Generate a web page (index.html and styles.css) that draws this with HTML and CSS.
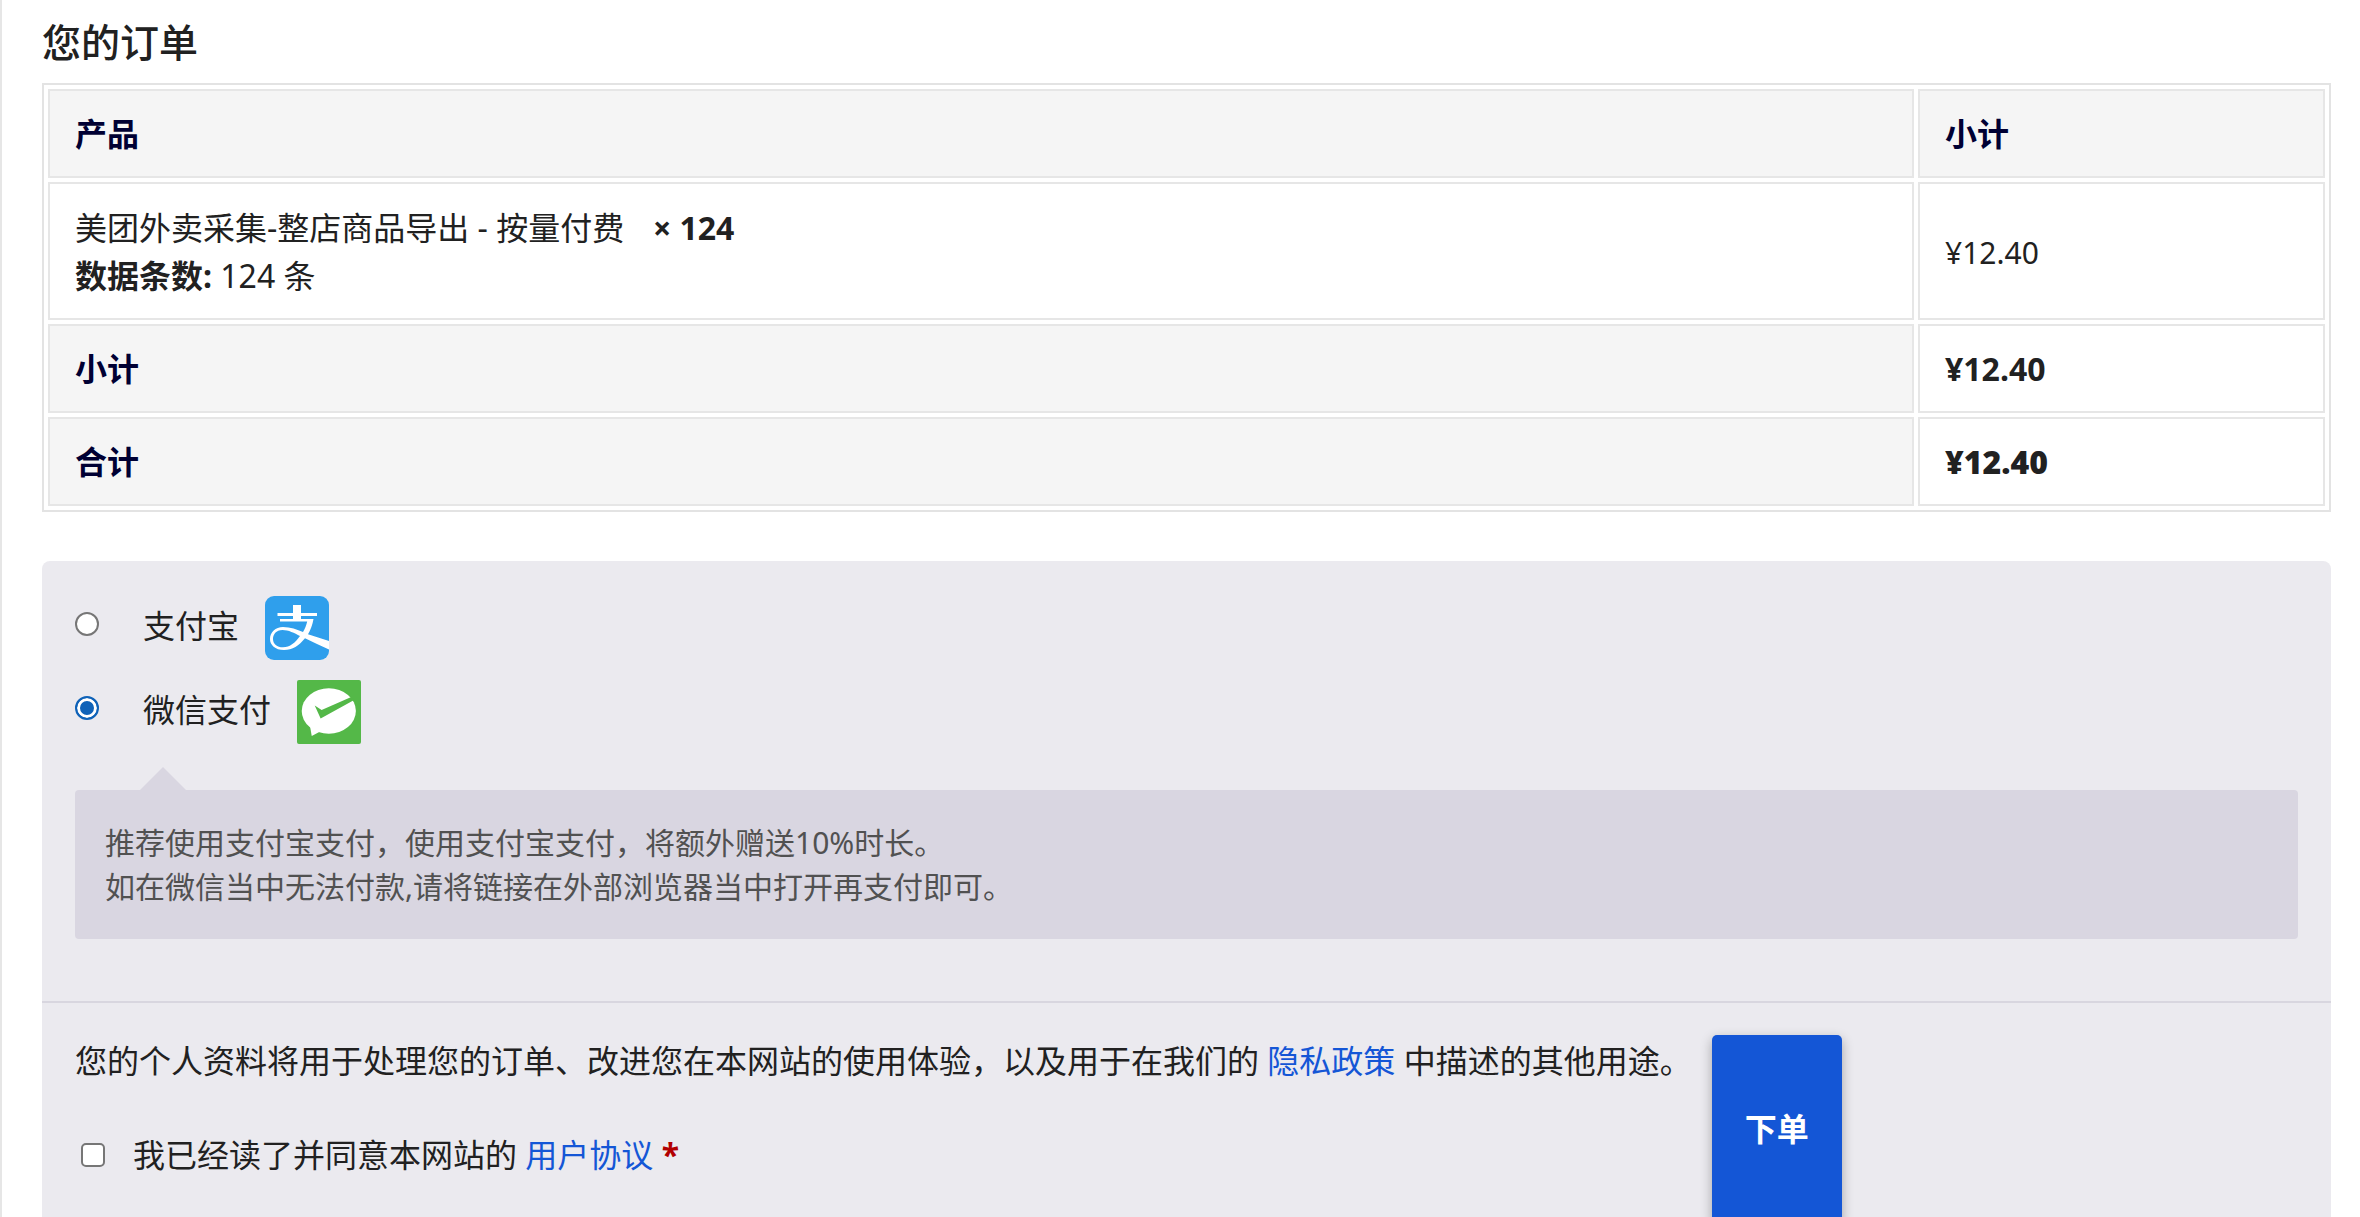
FILE: index.html
```html
<!DOCTYPE html>
<html lang="zh-CN">
<head>
<meta charset="utf-8">
<meta name="viewport" content="width=device-width, initial-scale=1">
<title>您的订单</title>
<link rel="stylesheet" href="styles.css">
</head>
<body>
<main class="checkout">
  <h3 class="checkout-title">您的订单</h3>

  <table class="order-table">
    <colgroup>
      <col>
      <col class="col-total">
    </colgroup>
    <thead>
      <tr><th scope="col">产品</th><th scope="col">小计</th></tr>
    </thead>
    <tbody>
      <tr>
        <td>
          <div><span class="product-name">美团外卖采集-整店商品导出 - 按量付费</span>&nbsp; <strong>×&nbsp;124</strong></div>
          <div><strong>数据条数:</strong> 124 条</div>
        </td>
        <td><span class="amount">¥12.40</span></td>
      </tr>
    </tbody>
    <tfoot>
      <tr><th scope="row">小计</th><td class="subtotal">¥12.40</td></tr>
      <tr><th scope="row">合计</th><td class="total">¥12.40</td></tr>
    </tfoot>
  </table>

  <form class="payment">
    <div class="methods">
      <div class="method">
        <input type="radio" id="pay-alipay" name="payment">
        <label for="pay-alipay"><span>支付宝</span>
          <svg class="logo" viewBox="0 0 64 64" aria-hidden="true">
            <rect width="64" height="64" rx="9" fill="#2f9fec"/>
            <path fill="#fff" d="M28 9h8v8h16v3H36v3h12.500C47.500 29 45.500 34 43 38.200L64 45v8.500C56 50 48 46 40 42.200 34 49.500 27.500 54 19 54 10 54 5 49 5 43c0-7 5.500-12 13-12 7.500 0 14 2.500 20 5 2-3.300 3.300-6.500 4.200-10.500H15V23h13v-3H12.500v-3H28zM17.500 34C11 34 8 38.500 8 43c0 5 4 8.300 10 8.300 7 0 12.500-4.800 17-11.300C29.500 37 23.500 34 17.500 34z"/>
          </svg>
        </label>
      </div>
      <div class="method">
        <input type="radio" id="pay-wechat" name="payment" checked>
        <label for="pay-wechat"><span>微信支付</span>
          <svg class="logo" viewBox="0 0 65 65" aria-hidden="true">
            <rect width="65" height="65" rx="2" fill="#54b848"/>
            <ellipse cx="32.300" cy="31.500" rx="27.500" ry="23" fill="#fff"/>
            <path fill="#fff" d="M13 46l2 11 9-5z"/>
            <path fill="#54b848" d="M18 26l7 4.500L54.500 17.500l4 2.500L24 39z"/>
          </svg>
        </label>
      </div>
      <div class="method-note">
        <p>推荐使用支付宝支付，使用支付宝支付，将额外赠送10%时长。<br>如在微信当中无法付款,请将链接在外部浏览器当中打开再支付即可。</p>
      </div>
    </div>

    <div class="place-order">
      <div class="terms">
        <p>您的个人资料将用于处理您的订单、改进您在本网站的使用体验，以及用于在我们的 <a href="#privacy">隐私政策</a> 中描述的其他用途。</p>
        <div class="agree">
          <input type="checkbox" id="agree" required>
          <label for="agree">我已经读了并同意本网站的 <a href="#terms">用户协议</a> <abbr class="required">*</abbr></label>
        </div>
      </div>
      <button type="submit" class="submit">下单</button>
    </div>
  </form>
</main>
</body>
</html>
```
FILE: styles.css
```css
* {
  box-sizing: border-box;
}

body {
  margin: 0;
  height: 100vh;
  overflow: hidden;
  background: #fff;
  color: #212121;
  font: 32px/48px "Noto Sans", "Noto Sans CJK SC", sans-serif;
}

p,
h3 {
  margin: 0;
}

a {
  color: #1456d6;
  text-decoration: none;
}

input {
  flex: none;
  width: 24px;
  height: 24px;
  margin: 0;
  border: 2px solid #767676;
  background: #fff;
  appearance: none;
}

input[type="radio"] {
  border-radius: 50%;
}

input[type="checkbox"] {
  border-radius: 5px;
}

input:checked {
  border-color: #0f62b8;
  background: #0f62b8;
  box-shadow: inset 0 0 0 3px #fff;
}

.checkout {
  min-height: 100%;
  padding: 12px 29px 0 40px;
  border-left: 2px solid #e6e6e6;
}

.checkout-title {
  margin-bottom: 11px;
  font-size: 39px;
  line-height: 60px;
  font-weight: 500;
}

/* Order summary */
.order-table {
  width: 100%;
  table-layout: fixed;
  border: 2px solid #e3e3e3;
  border-collapse: separate;
  border-spacing: 4px;
}

.col-total {
  width: 407px;
}

.order-table th,
.order-table td {
  padding: 19px 25px 18px;
  border: 2px solid #e6e6e6;
  text-align: left;
  vertical-align: middle;
}

.order-table tbody td {
  padding-top: 20px;
}

.order-table th {
  background: #f5f5f5;
  color: #000033;
  font-weight: 700;
}

.product-name {
  margin-right: 12px;
}

.amount {
  font-size: 30px;
}

.subtotal {
  font-weight: 700;
}

.total {
  font-weight: 900;
}

/* Payment methods */
.payment {
  margin-top: 49px;
  border-radius: 8px;
  background: #ebeaef;
}

.methods {
  display: flex;
  flex-direction: column;
  gap: 20px;
  padding: 35px 33px 62px;
  border-bottom: 2px solid #d8d6df;
}

.method {
  display: flex;
  align-items: center;
  gap: 44px;
}

.method input {
  margin-bottom: 8px;
}

.method label {
  display: flex;
  align-items: center;
  gap: 26px;
}

.method span {
  padding-bottom: 4px;
}

.logo {
  width: 64px;
  height: 64px;
}

.method-note {
  position: relative;
  margin-top: 26px;
  padding: 31px 30px 30px;
  border-radius: 4px;
  background: #d9d6e1;
  color: #515151;
  font-size: 30px;
  line-height: 44px;
}

.method-note::before {
  content: "";
  position: absolute;
  bottom: 100%;
  left: 65px;
  border: 23px solid transparent;
  border-top: 0;
  border-bottom-color: #d9d6e1;
}

/* Terms and submit */
.place-order {
  display: flex;
  gap: 20px;
  padding: 32px 33px;
}

.terms {
  display: flex;
  flex-direction: column;
  gap: 46px;
  padding: 2px 0 44px;
}

.agree {
  display: flex;
  align-items: center;
  gap: 28px;
  padding-left: 6px;
}

.required {
  color: #b20000;
  font-weight: 700;
}

.submit {
  flex: none;
  width: 130px;
  border: 0;
  border-radius: 5px;
  background: #1456d6;
  box-shadow: 0 4px 12px rgb(0 0 0 / 30%);
  color: #fff;
  font: inherit;
  font-weight: 700;
}
```
